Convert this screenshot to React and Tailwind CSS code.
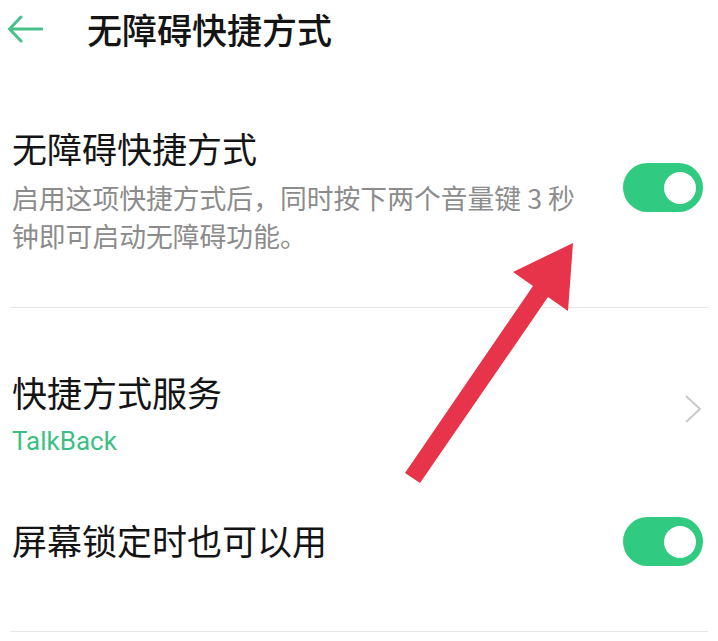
import { useState } from 'react';

const cjk = { fontFamily: '"Noto Sans CJK SC", "Noto Sans", sans-serif' };

function Toggle({ on, onClick }) {
  return (
    <button
      onClick={onClick}
      className={`relative w-[80px] h-[49px] rounded-full shrink-0 ${on ? 'bg-[#30cb80]' : 'bg-[#d9d9d9]'}`}
    >
      <span
        className={`absolute top-[8.5px] w-[32px] h-[32px] rounded-full bg-white ${on ? 'left-[41px]' : 'left-[7px]'}`}
      />
    </button>
  );
}

export default function App() {
  const [shortcut, setShortcut] = useState(true);
  const [lockScreen, setLockScreen] = useState(true);

  return (
    <div className="relative w-[718px] h-[641px] bg-white overflow-hidden" style={cjk}>
      {/* Header */}
      <div className="h-[57px] flex items-center">
        <svg width="36" height="28" viewBox="0 0 36 28" className="ml-[7px]">
          <path d="M35 14H3M14 2L2.5 14L14 26" fill="none" stroke="#47c08a" strokeWidth="3" strokeLinecap="round" strokeLinejoin="round" />
        </svg>
        <h1 className="ml-[44px] text-[35px] leading-[44px] font-medium text-[#141414]">无障碍快捷方式</h1>
      </div>

      {/* Shortcut toggle */}
      <div className="flex items-start justify-between pt-[69px] pb-[52px] pl-[12px] pr-[15px]">
        <div className="w-[590px]">
          <div className="text-[35px] leading-[44px] text-[#141414]">无障碍快捷方式</div>
          <p className="mt-[9px] text-[26.8px] leading-[38px] text-[#8c8c8c]">
            启用这项快捷方式后，同时按下两个音量键 3 秒<br />钟即可启动无障碍功能。
          </p>
        </div>
        <div className="mt-[37px]">
          <Toggle on={shortcut} onClick={() => setShortcut(!shortcut)} />
        </div>
      </div>
      <div className="mx-[10px] h-px bg-[#e6e6e6]" />

      {/* Shortcut service */}
      <div className="flex items-center justify-between pt-[62px] pl-[12px] pr-[15px]">
        <div>
          <div className="text-[35px] leading-[44px] text-[#141414]">快捷方式服务</div>
          <div className="mt-[12px] text-[26px] leading-[30px] text-[#3dbf83]" style={{ fontFamily: 'Roboto, "Noto Sans", sans-serif' }}>
            TalkBack
          </div>
        </div>
        <svg width="20" height="30" viewBox="0 0 20 30" className="mb-[8px]">
          <path d="M3 2L17 15L3 28" fill="none" stroke="#c9c9c9" strokeWidth="2" />
        </svg>
      </div>

      {/* Lock screen */}
      <div className="flex items-start justify-between pt-[62px] pb-[64px] pl-[12px] pr-[15px]">
        <div className="text-[35px] leading-[44px] text-[#141414]">屏幕锁定时也可以用</div>
        <div className="-mt-[1px] -mb-[4px]">
          <Toggle on={lockScreen} onClick={() => setLockScreen(!lockScreen)} />
        </div>
      </div>
      <div className="mx-[10px] h-px bg-[#e6e6e6]" />

      {/* Annotation arrow */}
      <svg className="absolute inset-0 pointer-events-none" width="718" height="641" viewBox="0 0 718 641">
        <polygon
          points="573,243 568,311 548,297 420,483 405,473 533,286 513,272"
          fill="#e8344b"
        />
      </svg>
    </div>
  );
}
